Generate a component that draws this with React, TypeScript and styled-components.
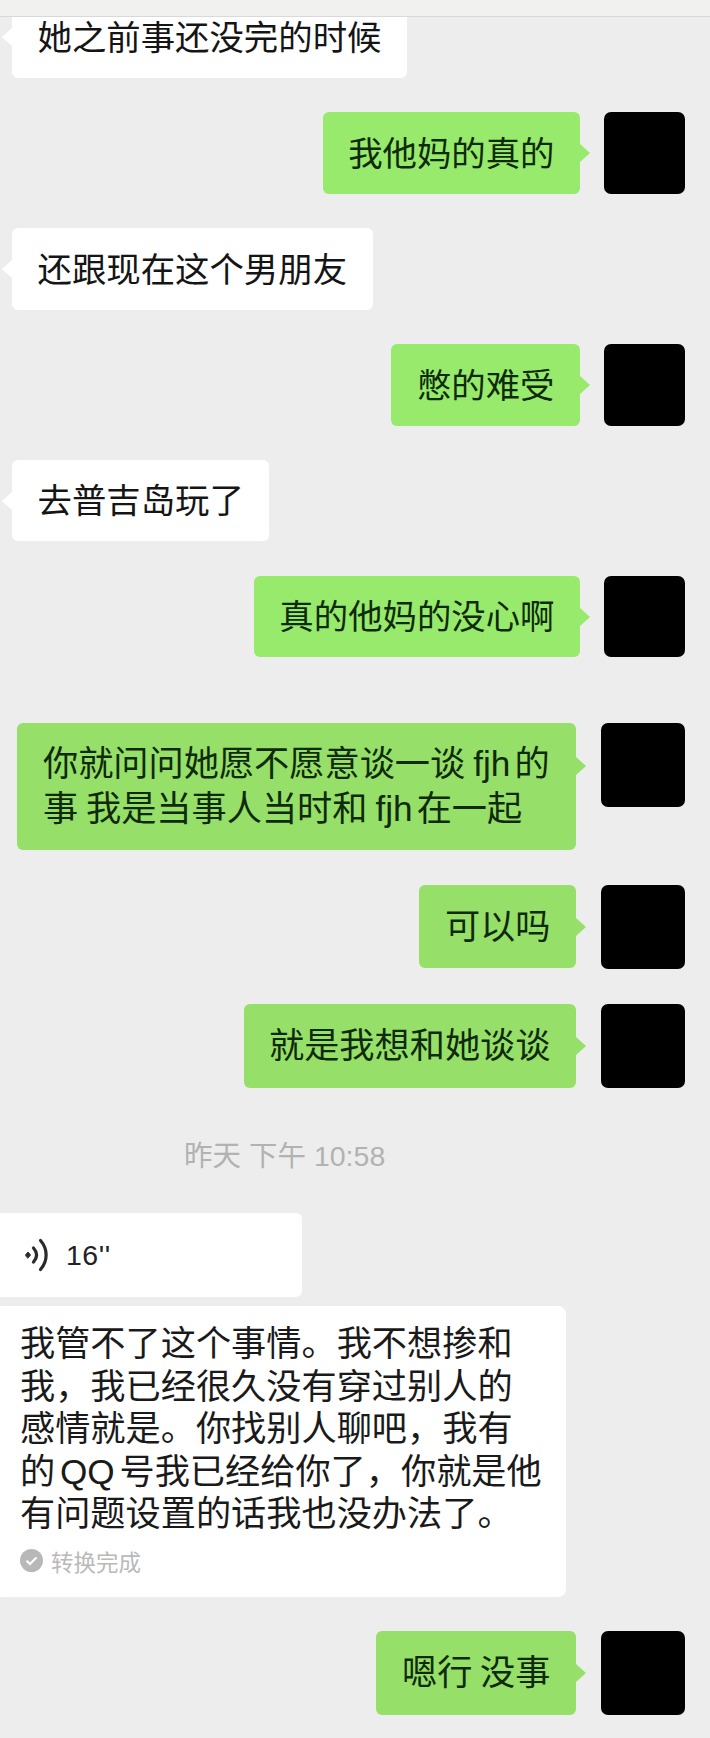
import React from "react";
import styled, { createGlobalStyle } from "styled-components";

const Global = createGlobalStyle`
  html, body { margin: 0; padding: 0; background: #ededed; }
  body { font-family: "Liberation Sans", "Noto Sans CJK SC", sans-serif; }
`;

const Phone = styled.div`
  width: 710px;
  height: 1738px;
  display: flex;
  flex-direction: column;
  overflow: hidden;
  background: #ededed;
`;

const NavEdge = styled.header`
  flex: none;
  height: 17px;
  box-sizing: border-box;
  background: #f1f1ef;
  border-bottom: 1px solid #d9d9d9;
`;

const Messages = styled.main`
  flex: 1;
  min-height: 0;
  overflow: hidden;
  display: flex;
  flex-direction: column;
`;

const Row = styled.div<{ $top: number; $mine?: boolean }>`
  flex: none;
  display: flex;
  align-items: flex-start;
  justify-content: ${(p) => (p.$mine ? "flex-end" : "flex-start")};
  margin-top: ${(p) => p.$top}px;
  padding: ${(p) => (p.$mine ? "0 25px 0 0" : "0 0 0 12px")};
`;

const Bubble = styled.div<{ $h: number; $mine?: boolean; $wide?: boolean; $size: number }>`
  position: relative;
  box-sizing: border-box;
  min-height: ${(p) => p.$h}px;
  max-width: 559px;
  padding: ${(p) => (p.$wide ? "18px 24px 18px 26px" : p.$size < 35 ? "2px 25.5px 0" : "0 25.5px")};
  display: block;
  line-height: ${(p) => (p.$wide ? "45px" : `${p.$h - (p.$size < 35 ? 2 : 0)}px`)};
  border-radius: 6px;
  font-size: ${(p) => p.$size}px;
  word-spacing: -2px;
  color: ${(p) => (p.$mine ? "#0f2a0c" : "#151515")};
  background: ${(p) => (p.$mine ? (p.$size < 35 ? "#97ea6b" : "#96df68") : "#ffffff")};

  &::after {
    content: "";
    position: absolute;
    top: ${(p) => (p.$wide ? "34px" : "calc(50% - 9px)")};
    ${(p) => (p.$mine ? "right: -10px;" : "left: -10px;")}
    border-style: solid;
    border-width: 9px ${(p) => (p.$mine ? "0 9px 10px" : "10px 9px 0")};
    border-color: transparent ${(p) => (p.$mine ? "transparent transparent" : "#ffffff transparent transparent")}
      ${(p) => (p.$mine ? (p.$size < 35 ? "#97ea6b" : "#96df68") : "")};
  }
`;

const Initials = styled.span`
  margin: 0 4px 0 8px;
`;

const Avatar = styled.div<{ $w: number; $h: number; $gap: number }>`
  flex: none;
  width: ${(p) => p.$w}px;
  height: ${(p) => p.$h}px;
  margin-left: ${(p) => p.$gap}px;
  border-radius: 7px;
  background: #000;
`;

const TimeStamp = styled.div`
  flex: none;
  height: 40px;
  margin-top: 48px;
  padding-left: 184px;
  font-size: 28.5px;
  line-height: 40px;
  color: #b2b2b2;
`;

const Clock = styled.span`
  margin-left: 8px;
`;

const VoiceCard = styled.div`
  flex: none;
  box-sizing: border-box;
  width: 308px;
  height: 84px;
  margin: 37px 0 0 -6px;
  padding-left: 31px;
  display: flex;
  align-items: center;
  gap: 17px;
  background: #fff;
  border-radius: 6px;
  font-size: 28.5px;
  letter-spacing: 0.5px;
  color: #222;
`;

const Transcript = styled.section`
  flex: none;
  box-sizing: border-box;
  width: 572px;
  height: 291px;
  margin: 9px 0 0 -6px;
  padding: 17px 0 0 26px;
  background: #fff;
  border-radius: 8px;
  color: #1a1a1a;
`;

const TranscriptText = styled.p`
  margin: 0;
  font-size: 35.2px;
  line-height: 42.5px;
  word-spacing: -5px;
`;

const Status = styled.div`
  margin-top: 10px;
  display: flex;
  align-items: center;
  gap: 8px;
  height: 30px;
  font-size: 22.5px;
  color: #b9b9b9;
`;

const SpeakerWaves = () => (
  <svg width="24" height="36" viewBox="0 0 24 36" fill="none" stroke="#2a2a2a" strokeLinecap="round">
    <path d="M0.5 18 L3 15 L5.5 18 L3 21 Z" fill="#2a2a2a" strokeWidth="1" strokeLinejoin="round" />
    <path d="M8.5 11 C12.5 15.5 12.5 20.5 8.5 25" strokeWidth="3.2" />
    <path d="M15.5 3.5 C23 12 23 24 15.5 32.5" strokeWidth="3.2" />
  </svg>
);

const CheckBadge = () => (
  <svg width="23" height="23" viewBox="0 0 23 23">
    <circle cx="11.5" cy="11.5" r="11.5" fill="#b8b8b8" />
    <path d="M6.5 11.8 L10 15 L16.5 8.5" fill="none" stroke="#fff" strokeWidth="2.2" />
  </svg>
);

type Line = { text: React.ReactNode; top: number; h: number };

const upper: (Line & { mine: boolean })[] = [
  { text: "我他妈的真的", top: 34, h: 82, mine: true },
  { text: "还跟现在这个男朋友", top: 34, h: 82, mine: false },
  { text: "憋的难受", top: 34, h: 82, mine: true },
  { text: "去普吉岛玩了", top: 34, h: 81, mine: false },
  { text: "真的他妈的没心啊", top: 35, h: 81, mine: true },
];

const lower: Line[] = [
  {
    text: (
      <>
        你就问问她愿不愿意谈一谈<Initials>fjh</Initials>的 事 我是当事人当时和<Initials>fjh</Initials>在一起
      </>
    ),
    top: 66,
    h: 127,
  },
  { text: "可以吗", top: 35, h: 83 },
  { text: "就是我想和她谈谈", top: 35, h: 84 },
];

export default function App() {
  return (
    <Phone>
      <Global />
      <NavEdge />
      <Messages>
        <Row $top={-21}>
          <Bubble $h={82} $size={34.4}>她之前事还没完的时候</Bubble>
        </Row>
        {upper.map((m, i) => (
          <Row key={i} $top={m.top} $mine={m.mine}>
            <Bubble $h={m.h} $mine={m.mine} $size={34.4}>{m.text}</Bubble>
            {m.mine && <Avatar $w={81} $h={m.h} $gap={24} />}
          </Row>
        ))}
        {lower.map((m, i) => (
          <Row key={i} $top={m.top} $mine>
            <Bubble $h={m.h} $mine $size={35.2} $wide={m.h > 100}>{m.text}</Bubble>
            <Avatar $w={84} $h={84} $gap={25} />
          </Row>
        ))}
        <TimeStamp>
          昨天 下午<Clock>10:58</Clock>
        </TimeStamp>
        <VoiceCard>
          <SpeakerWaves />
          <span>16''</span>
        </VoiceCard>
        <Transcript>
          <TranscriptText>
            我管不了这个事情。我不想掺和<br />
            我，我已经很久没有穿过别人的<br />
            感情就是。你找别人聊吧，我有<br />
            的 QQ 号我已经给你了，你就是他<br />
            有问题设置的话我也没办法了。
          </TranscriptText>
          <Status>
            <CheckBadge />
            <span>转换完成</span>
          </Status>
        </Transcript>
        <Row $top={34} $mine>
          <Bubble $h={84} $mine $size={35.2}>嗯行 没事</Bubble>
          <Avatar $w={84} $h={84} $gap={25} />
        </Row>
      </Messages>
    </Phone>
  );
}
